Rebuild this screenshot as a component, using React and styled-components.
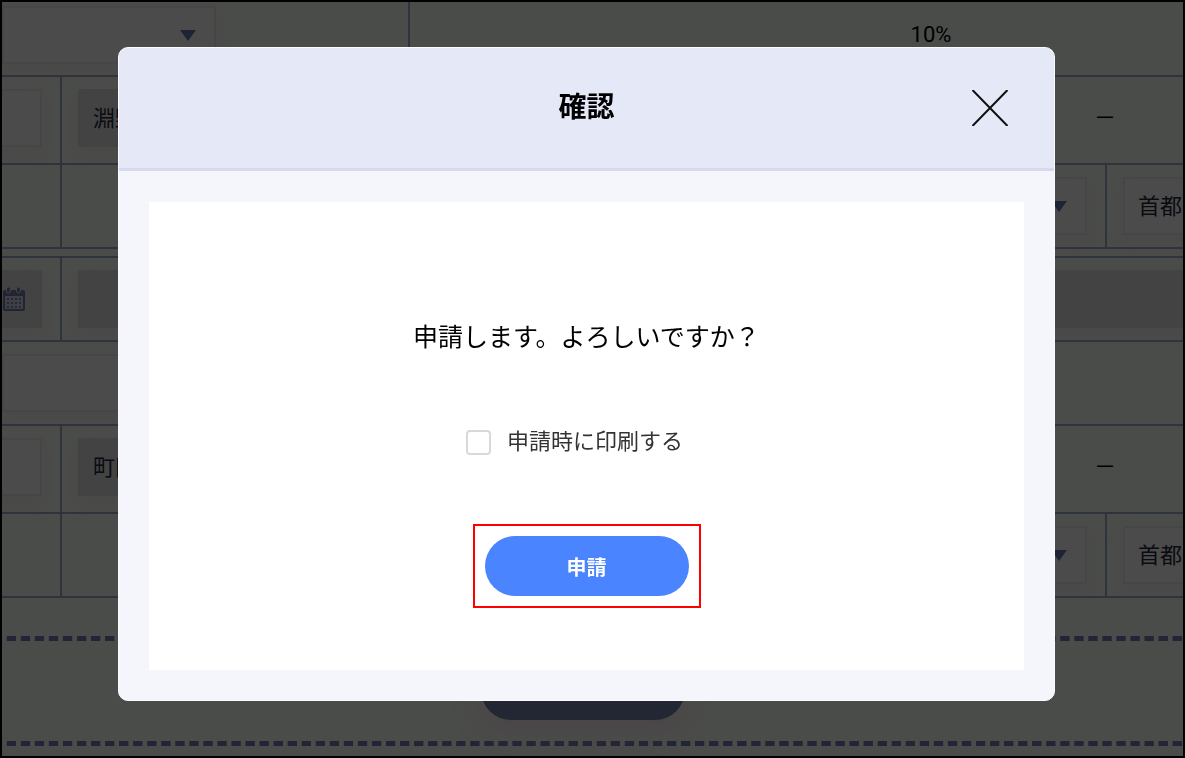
import React, { useState } from "react";
import styled, { createGlobalStyle, css } from "styled-components";

function Calendar() {
  return (
    <svg width="22" height="24" viewBox="0 0 22 24" aria-hidden="true">
      <rect x="0" y="3" width="22" height="21" rx="2" fill="#7079ad" />
      <rect x="3.500" y="0" width="4" height="6" rx="2" fill="#7079ad" stroke="#e0e0e0" />
      <rect x="13.500" y="0" width="4" height="6" rx="2" fill="#7079ad" stroke="#e0e0e0" />
      <rect x="2" y="9" width="18" height="13" fill="#d4d5df" />
      {[11, 15, 19].map((y) =>
        [4, 8, 12, 16].map((x) => (
          <rect key={`${x}-${y}`} x={x} y={y} width="2" height="2" fill="#7f87b5" />
        ))
      )}
    </svg>
  );
}

function PersonRow({ name }) {
  return (
    <Row $height={88} $raised={4}>
      <Cell $width={60} $align="flex-end" $line>
        <Field aria-label="番号" $width={120} />
      </Cell>
      <Cell $grow>
        <Field aria-label="駅名" $width={160} $disabled defaultValue={name} readOnly />
      </Cell>
      <Cell $width={156} $align="center" $raise>－</Cell>
    </Row>
  );
}

function AreaRow() {
  return (
    <Row $height={84}>
      <Cell $width={60} $line />
      <Cell $grow $align="flex-end" $line>
        <SelectWrap>
          <Select aria-label="区分" $width={160} />
        </SelectWrap>
      </Cell>
      <Cell $width={76}>
        <Field aria-label="地域" $width={160} defaultValue="首都圏" />
      </Cell>
    </Row>
  );
}

function App() {
  const [print, setPrint] = useState(false);

  return (
    <>
      <GlobalStyle />
      <Page>
        <Row $height={75} $raised={8}>
          <Cell $width={408} $line $flush>
            <SelectWrap>
              <Select aria-label="税区分" $width={214} />
            </SelectWrap>
          </Cell>
          <Cell $width={1042} $align="center">10%</Cell>
        </Row>
        <PersonRow name="淵野辺" />
        <AreaRow />
        <Gap />
        <Row $height={86} $top>
          <Cell $width={60} $align="flex-end" $line>
            <DateBox>
              <Calendar />
            </DateBox>
          </Cell>
          <Cell $grow>
            <Field aria-label="備考" $disabled readOnly />
          </Cell>
        </Row>
        <Row $height={84}>
          <Cell $grow $flush>
            <Field aria-label="内容" $width={600} />
          </Cell>
        </Row>
        <PersonRow name="町田" />
        <AreaRow />
        <Dashes $space={38} />
        <Footer>
          <PillButton type="button" $muted aria-label="次へ" />
        </Footer>
        <Dashes />
      </Page>

      <Overlay>
        <Modal role="dialog" aria-modal="true" aria-labelledby="modal-title">
          <Header>
            <Title id="modal-title">確認</Title>
            <CloseButton type="button" aria-label="閉じる">
              <svg width="36" height="36" viewBox="0 0 36 36">
                <path d="M0.500 0L35.500 36M35.500 0L0.500 36" stroke="#111" strokeWidth="2" />
              </svg>
            </CloseButton>
          </Header>
          <Body>
            <Panel>
              <Message>申請します。よろしいですか？</Message>
              <CheckLabel>
                <Checkbox
                  type="checkbox"
                  checked={print}
                  onChange={(e) => setPrint(e.target.checked)}
                />
                申請時に印刷する
              </CheckLabel>
              <Highlight>
                <PillButton type="button">申請</PillButton>
              </Highlight>
            </Panel>
          </Body>
        </Modal>
      </Overlay>
    </>
  );
}

const GlobalStyle = createGlobalStyle`
  * {
    box-sizing: border-box;
  }
  body {
    margin: 0;
    background: #000;
    font-family: Roboto, "Noto Sans CJK JP", sans-serif;
    font-size: 22px;
    color: #000;
  }
  button, input, select {
    font: inherit;
  }
`;

const Page = styled.main`
  min-height: 100vh;
  border: 2px solid #000;
  background: #f7fdf7;
  overflow: hidden;
`;

const Row = styled.div`
  display: flex;
  height: ${(p) => p.$height}px;
  border-bottom: 2px solid #a0a8c8;
  border-top: ${(p) => (p.$top ? "2px solid #a0a8c8" : "none")};

  > div {
    padding-bottom: ${(p) => p.$raised || 0}px;
  }
`;

const Cell = styled.div`
  display: flex;
  align-items: center;
  justify-content: ${(p) => p.$align || "flex-start"};
  flex: ${(p) => (p.$grow ? "1 1 0" : `0 0 ${p.$width}px`)};
  padding-left: ${(p) => (p.$flush || p.$align === "center" ? 0 : 16)}px;
  padding-right: ${(p) => (p.$align === "flex-end" ? 18 : 0)}px;
  border-right: ${(p) => (p.$line ? "2px solid #a0a8c8" : "none")};
  line-height: ${(p) => (p.$raise ? "28px" : "normal")};
  min-width: 0;
`;

const box = css`
  height: 58px;
  flex: none;
  width: ${(p) => (p.$width ? `${p.$width}px` : "100%")};
  border: 2px solid ${(p) => (p.$disabled ? "#e0e0e0" : "#efebeb")};
  border-radius: 0;
  background: ${(p) => (p.$disabled ? "#e0e0e0" : "#fefafa")};
  box-shadow: 0 8px 12px rgba(255, 220, 230, 0.3);
  color: #222b3d;
`;

const Field = styled.input`
  ${box}
  padding: 0 13px 4px;
`;

const DateBox = styled.div`
  ${box}
  width: 120px;
  display: flex;
  align-items: center;
  justify-content: flex-end;
  padding-right: 15px;
  background: #e0e0e0;
  border-color: #e0e0e0;
`;

const SelectWrap = styled.div`
  position: relative;

  &::after {
    content: "";
    position: absolute;
    right: 20px;
    top: 24px;
    border: 8px solid transparent;
    border-top: 11px solid #6775b4;
    border-bottom: 0;
  }
`;

const Select = styled.select`
  ${box}
  display: block;
  appearance: none;
`;

const Gap = styled.div`
  height: 7px;
`;

const Dashes = styled.div`
  height: 5px;
  margin-top: ${(p) => p.$space || 0}px;
  background-image: linear-gradient(to right, transparent 5px, #717cba 5px);
  background-size: 14px 5px;
  background-repeat: round;
`;

const Footer = styled.div`
  height: 100px;
  display: flex;
  justify-content: center;
  align-items: flex-end;
  padding: 0 20px 21px 0;
`;

const Overlay = styled.div`
  position: fixed;
  inset: 0;
  padding: 47px 130px 0 118px;
  background: rgba(0, 0, 0, 0.7);
`;

const Modal = styled.section`
  border: 1px solid #fbfbff;
  border-radius: 10px;
  background: #f4f6fb;
  overflow: hidden;
`;

const Header = styled.header`
  display: grid;
  grid-template-columns: 1fr auto 1fr;
  align-items: center;
  height: 123px;
  padding: 0 46px;
  background: #e5e8f7;
  border-bottom: 3px solid #d6d9ef;
`;

const Title = styled.h2`
  grid-column: 2;
  margin: 0;
  font-size: 28px;
  line-height: 40px;
  font-weight: 700;
`;

const CloseButton = styled.button`
  justify-self: end;
  padding: 0;
  border: none;
  background: none;
  cursor: pointer;

  svg {
    display: block;
  }
`;

const Body = styled.div`
  padding: 31px 30px 30px;
`;

const Panel = styled.div`
  display: flex;
  flex-direction: column;
  align-items: center;
  padding: 118px 0 62px;
  background: #fff;
`;

const Message = styled.p`
  margin: 0;
  font-size: 25px;
  line-height: 36px;
`;

const CheckLabel = styled.label`
  display: flex;
  align-items: center;
  gap: 16px;
  margin: 70px 24px 66px 0;
  line-height: 32px;
  color: #333;
  cursor: pointer;
`;

const Checkbox = styled.input`
  appearance: none;
  width: 25px;
  height: 25px;
  margin: 0;
  border: 2px solid #d9d9d9;
  border-radius: 4px;
  background: #fff;

  &:checked {
    border-color: #4a84ff;
    background: #4a84ff;
  }
`;

const Highlight = styled.div`
  padding: 10px;
  border: 2px solid #f00;
`;

const PillButton = styled.button`
  display: block;
  width: 204px;
  height: 60px;
  padding: 0;
  border: none;
  border-radius: 30px;
  background: ${(p) => (p.$muted ? "#7584ac" : "#4a84ff")};
  box-shadow: ${(p) => (p.$muted ? "0 8px 24px rgba(255, 205, 225, 0.5)" : "none")};
  color: #fff;
  font-size: 20px;
  font-weight: 700;
  cursor: pointer;
`;

export default App;
